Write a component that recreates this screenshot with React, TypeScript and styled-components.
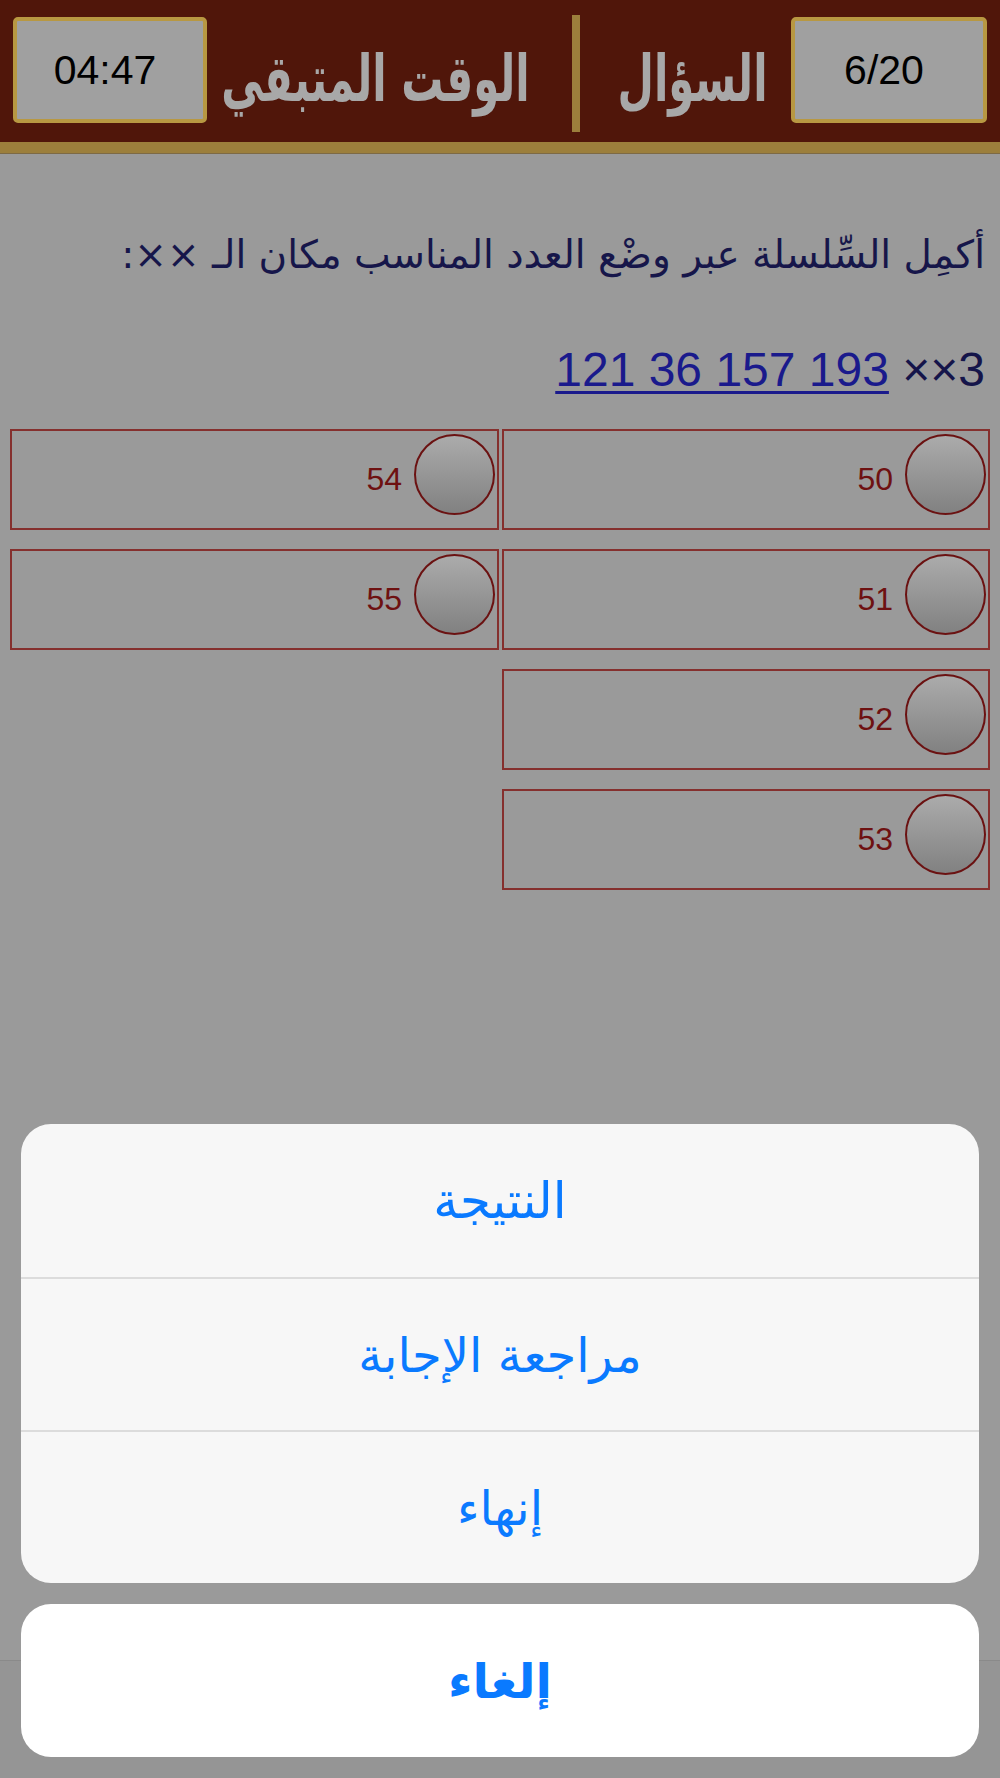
import styled, { createGlobalStyle } from 'styled-components'

const arabic = `"DejaVu Sans", "Noto Sans", sans-serif`
const latin = `"Liberation Sans", Arial, sans-serif`

const GlobalStyle = createGlobalStyle`
  html, body {
    margin: 0;
    padding: 0;
    background: #9a9a9a;
  }
  * {
    box-sizing: border-box;
  }
`

const options = [
  { id: 50 },
  { id: 51 },
  { id: 52 },
  { id: 53 },
  { id: 54 },
  { id: 55 },
]

const actions = [
  { label: 'النتيجة', size: 50 },
  { label: 'مراجعة الإجابة', size: 48 },
  { label: 'إنهاء', size: 48 },
]

export default function App() {
  return (
    <>
      <GlobalStyle />
      <Page>
        <Header>
          <StatBox>04:47</StatBox>
          <HeaderLabel $offset={-14}>الوقت المتبقي</HeaderLabel>
          <Divider />
          <HeaderLabel $offset={7}>السؤال</HeaderLabel>
          <StatBox>6/20</StatBox>
        </Header>

        <Content>
          <Question>أكمِل السِّلسلة عبر وضْع العدد المناسب مكان الـ ××:</Question>
          <Series>
            <SeriesLink href="#">121 36 157 193</SeriesLink> ××3
          </Series>
          <Options>
            {options.map((o) => (
              <Option key={o.id}>
                <Radio />
                <OptionValue>{o.id}</OptionValue>
              </Option>
            ))}
          </Options>
        </Content>

        <TabBar />

        <Sheet>
          <SheetGroup>
            {actions.map((a) => (
              <SheetButton key={a.label} $size={a.size}>
                {a.label}
              </SheetButton>
            ))}
          </SheetGroup>
          <CancelButton $size={48}>إلغاء</CancelButton>
        </Sheet>
      </Page>
    </>
  )
}

const Page = styled.div`
  position: relative;
  width: 1000px;
  height: 1778px;
  display: flex;
  flex-direction: column;
  overflow: hidden;
  background: #9a9a9a;
`

const Header = styled.header`
  height: 153px;
  flex-shrink: 0;
  background: #50160a;
  border-bottom: 11px solid #9c7f3c;
  box-shadow: 0 1px 0 #7d6a45;
  display: grid;
  grid-template-columns: 194px 365px 8px minmax(0, 1fr) 196px;
  align-items: start;
  padding: 17px 13px 0;
`

const StatBox = styled.div`
  height: 106px;
  display: flex;
  align-items: center;
  justify-content: center;
  padding-right: 10px;
  background: #a0a0a0;
  border: 4px solid #b89842;
  border-radius: 5px;
  font: 41px ${latin};
  color: #000;
`

const HeaderLabel = styled.div<{ $offset: number }>`
  height: 106px;
  display: flex;
  align-items: center;
  justify-content: center;
  padding-top: 14px;
  transform: translateX(${({ $offset }) => $offset}px) scale(0.84, 1.3);
  direction: rtl;
  font: bold 50px ${arabic};
  color: #a8a8a8;
  white-space: nowrap;
`

const Divider = styled.div`
  width: 8px;
  height: 117px;
  margin-top: -2px;
  background: #9c7f3c;
`

const Content = styled.main`
  flex: 1;
  direction: rtl;
  padding: 0 10px;
`

const Question = styled.p`
  margin: 72px 5px 0 0;
  font: 39px/60px ${arabic};
  color: #16164a;
  white-space: nowrap;
`

const Series = styled.p`
  margin: 55px 5px 0 0;
  direction: ltr;
  text-align: right;
  font: 48px/60px ${latin};
  color: #15154a;
`

const SeriesLink = styled.a`
  color: #1a1a8c;
  text-decoration: underline;
  text-decoration-thickness: 3px;
  text-underline-offset: 5px;
`

const Options = styled.div`
  margin-top: 29px;
  display: grid;
  grid-template-columns: 488px 489px;
  grid-template-rows: repeat(4, 101px);
  grid-auto-flow: column;
  column-gap: 3px;
  row-gap: 19px;
`

const Option = styled.div`
  display: flex;
  align-items: center;
  padding-right: 2px;
  border: 2px solid #85302e;
`

const Radio = styled.span`
  width: 81px;
  height: 81px;
  margin-top: -10px;
  border-radius: 50%;
  border: 2px solid #6b1212;
  background: linear-gradient(#ababab, #818181);
  flex-shrink: 0;
`

const OptionValue = styled.span`
  margin-right: 12px;
  font: 32px ${latin};
  color: #6e1111;
`

const TabBar = styled.div`
  height: 118px;
  flex-shrink: 0;
  border-top: 1px solid #8a8a8a;
  background: #959595;
`

const Sheet = styled.div`
  position: absolute;
  left: 21px;
  right: 21px;
  bottom: 21px;
  display: flex;
  flex-direction: column;
  gap: 21px;
`

const SheetGroup = styled.div`
  background: #f7f7f7;
  border-radius: 30px;
  overflow: hidden;
`

const SheetButton = styled.div<{ $size: number }>`
  height: 153px;
  display: flex;
  align-items: center;
  justify-content: center;
  direction: rtl;
  font-family: ${arabic};
  font-size: ${({ $size }) => $size}px;
  color: #0a7aff;
  & + & {
    border-top: 2px solid #dcdcdc;
  }
`

const CancelButton = styled(SheetButton)`
  background: #fff;
  border-radius: 30px;
  font-weight: bold;
`
